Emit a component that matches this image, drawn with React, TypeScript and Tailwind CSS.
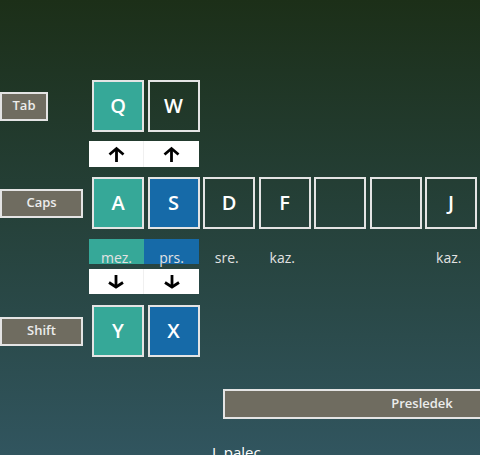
import React from "react";

const FONT = { fontFamily: '"Open Sans", "Noto Sans", sans-serif' };

function Key({ letter, tone }: { letter: string; tone: "teal" | "blue" | "dark" }) {
  const bg = tone === "teal" ? "bg-[#36a898]" : tone === "blue" ? "bg-[#166aa8]" : "bg-transparent";
  return (
    <div className="w-[55.5px] shrink-0 flex">
      <div
        className={`ml-[3px] w-[52px] h-[52px] border-2 border-[#e4e4e4] ${bg} flex items-center justify-center text-[20px] font-semibold text-white leading-none`}
      >
        {letter}
      </div>
    </div>
  );
}

function SideBtn({ label, w }: { label: string; w: string }) {
  return (
    <div className="w-[89px] shrink-0 flex items-center">
      <div
        className={`${w} h-[29px] border-2 border-[#e4e4e4] bg-[#6f6c60] flex items-center justify-center text-[13px] font-semibold text-[#ececec]`}
      >
        {label}
      </div>
    </div>
  );
}

function UpArrow() {
  return (
    <svg width="17" height="16" viewBox="0 0 17 16" fill="none" stroke="#000" strokeWidth="2.8" strokeLinecap="butt" strokeLinejoin="miter">
      <path d="M8.5 16V3" />
      <path d="M1.5 8.5L8.5 2.5L15.5 8.5" />
    </svg>
  );
}

function DownArrow() {
  return (
    <svg width="16" height="14" viewBox="0 0 16 14" fill="none" stroke="#000" strokeWidth="2.8" strokeLinecap="butt" strokeLinejoin="miter">
      <path d="M8 0V11.5" />
      <path d="M1 7.5L8 12L15 7.5" />
    </svg>
  );
}

function ArrowBar({ dir, h }: { dir: "up" | "down"; h: string }) {
  return (
    <div className="flex pl-[89px]">
      <div className={`flex bg-white ${h}`}>
        <div className="w-[55px] flex items-center justify-center border-r border-[#f0f0f0]">
          {dir === "up" ? <UpArrow /> : <DownArrow />}
        </div>
        <div className="w-[55px] flex items-center justify-center">
          {dir === "up" ? <UpArrow /> : <DownArrow />}
        </div>
      </div>
    </div>
  );
}

function Label({ text, bg }: { text: string; bg?: string }) {
  return (
    <div className={`w-[55.5px] shrink-0 h-[25px] flex items-end justify-center ${bg ?? ""}`}>
      <span className="text-[14px] leading-none translate-y-[1px] text-[#e2e2e2]">{text}</span>
    </div>
  );
}

export default function App() {
  return (
    <div
      className="w-[480px] h-[455px] overflow-hidden bg-linear-to-b from-[#1c2f18] to-[#31555f] flex flex-col pt-[80px]"
      style={FONT}
    >
      <div className="flex">
        <SideBtn label="Tab" w="w-[48px]" />
        <Key letter="Q" tone="teal" />
        <Key letter="W" tone="dark" />
      </div>
      <div className="mt-[9px]">
        <ArrowBar dir="up" h="h-[26px]" />
      </div>
      <div className="flex mt-[10px] whitespace-nowrap">
        <SideBtn label="Caps" w="w-[83px]" />
        <Key letter="A" tone="teal" />
        <Key letter="S" tone="blue" />
        <Key letter="D" tone="dark" />
        <Key letter="F" tone="dark" />
        <Key letter="" tone="dark" />
        <Key letter="" tone="dark" />
        <Key letter="J" tone="dark" />
      </div>
      <div className="flex mt-[10px] pl-[89px]">
        <div className="w-[55px] shrink-0 h-[25px] bg-[#36a898] flex items-end justify-center">
          <span className="text-[14px] leading-none translate-y-[1px] text-[#e2e2e2]">mez.</span>
        </div>
        <div className="w-[55px] shrink-0 h-[25px] bg-[#166aa8] flex items-end justify-center">
          <span className="text-[14px] leading-none translate-y-[1px] text-[#e2e2e2]">prs.</span>
        </div>
        <Label text="sre." />
        <Label text="kaz." />
        <Label text="" />
        <Label text="" />
        <Label text="kaz." />
      </div>
      <div className="mt-[5px]">
        <ArrowBar dir="down" h="h-[25px]" />
      </div>
      <div className="flex mt-[11px]">
        <SideBtn label="Shift" w="w-[83px]" />
        <Key letter="Y" tone="teal" />
        <Key letter="X" tone="blue" />
      </div>
      <div className="flex mt-[32px] pl-[223px]">
        <div className="w-[398px] shrink-0 h-[30px] border-2 border-[#e4e4e4] bg-[#6f6c60] flex items-center justify-center text-[13px] font-semibold text-[#ececec]">
          Presledek
        </div>
      </div>
      <div className="mt-[23px] pl-[212px] text-[15px] leading-[20px] text-white whitespace-nowrap">
        L palec
      </div>
    </div>
  );
}
